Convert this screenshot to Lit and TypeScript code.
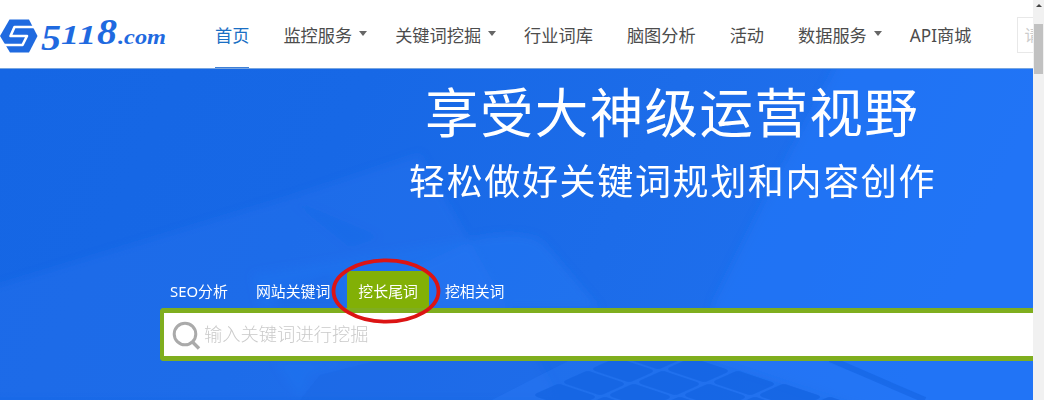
import { LitElement, html, css, svg } from 'lit';
import { customElement, state } from 'lit/decorators.js';

interface NavItem {
  label: string;
  menu?: boolean;
}

const NAV: NavItem[] = [
  { label: '首页' },
  { label: '监控服务', menu: true },
  { label: '关键词挖掘', menu: true },
  { label: '行业词库' },
  { label: '脑图分析' },
  { label: '活动' },
  { label: '数据服务', menu: true },
  { label: 'API商城' },
];

const TABS = ['SEO分析', '网站关键词', '挖长尾词', '挖相关词'];

@customElement('site-logo')
class SiteLogo extends LitElement {
  render() {
    return html`
      <svg width="168" height="48" viewBox="0 12 168 48">
        <path fill="#1f6ae0" d="M9.5 20.5H29L37.5 37L29 53.5H10L0 37Z" />
        <path fill="none" stroke="#fff" stroke-width="2.6" stroke-linejoin="round" d="M38 28H14.5L10.5 37H27L22.5 46H0" />
        <g class="word">
          <text x="41" y="51" font-size="36" textLength="20" lengthAdjust="spacingAndGlyphs">5</text>
          <text x="61" y="44.5" font-size="27" textLength="18" lengthAdjust="spacingAndGlyphs">1</text>
          <text x="78" y="44.5" font-size="27" textLength="18" lengthAdjust="spacingAndGlyphs">1</text>
          <text x="97" y="44.5" font-size="36" textLength="20" lengthAdjust="spacingAndGlyphs">8</text>
          <text x="118" y="44.5" font-size="22" textLength="48" lengthAdjust="spacingAndGlyphs">.com</text>
        </g>
      </svg>
    `;
  }

  static styles = css`
    :host {
      display: block;
      flex: none;
      width: 168px;
      height: 48px;
    }

    svg {
      display: block;
    }

    .word {
      fill: #1f6ae0;
      font-family: 'Liberation Serif', serif;
      font-style: italic;
      font-weight: bold;
    }
  `;
}

@customElement('site-header')
class SiteHeader extends LitElement {
  render() {
    return html`
      <header class="header">
        <site-logo></site-logo>
        <nav class="nav">
          ${NAV.map((item, i) => html`
            <a class=${i === 0 ? 'item active' : 'item'}>
              <span class="label">${item.label}</span>${item.menu ? html`<i class="caret"></i>` : ''}
            </a>
          `)}
        </nav>
        <div class="search">请</div>
      </header>
    `;
  }

  static styles = css`
    :host {
      display: block;
    }

    .header {
      display: flex;
      align-items: center;
      box-sizing: border-box;
      height: 69px;
      padding-top: 2px;
      background: #fff;
      border-bottom: 1px solid #77a5df;
      overflow: hidden;
    }

    .nav {
      display: flex;
      align-self: stretch;
      gap: 34px;
      margin-left: 47px;
      flex: none;
    }

    .item {
      display: flex;
      align-items: center;
      color: #4c4c4c;
      font-size: 17.2px;
      font-weight: 400;
      white-space: nowrap;
    }

    .label {
      padding-bottom: 1px;
    }

    .active {
      color: #1a6fc4;
      box-shadow: inset 0 -1px #3f7fd6;
    }

    .caret {
      margin: -3px -6px 0 7px;
      border: 4.5px solid transparent;
      border-top: 5px solid #666;
      border-bottom: 0;
    }

    .search {
      flex: none;
      width: 80px;
      height: 34px;
      margin-left: 46px;
      padding-left: 6px;
      border: 1px solid #e8e8e8;
      color: #ccc;
      font-size: 16px;
      line-height: 34px;
    }
  `;
}

@customElement('hero-backdrop')
class HeroBackdrop extends LitElement {
  // slanted key caps of the keyboard at the lower edge
  keys() {
    const keys = [];
    for (let row = 0; row < 4; row++) {
      for (let col = 0; col < 6; col++) {
        const x = 650 + col * 46 - row * 29;
        const y = 277 + col * 13 + row * 13;
        keys.push(svg`<path class="key" d="M${x} ${y}l30 10q4 2 0 4l-18 8q-4 2 -8 0l-30 -10q-4 -2 0 -4l18 -8q4 -2 8 0z" />`);
      }
    }
    return keys;
  }

  render() {
    return html`
      <svg width="1033" height="331" viewBox="0 0 1033 331">
        <defs>
          <linearGradient id="base" x1="0" y1="0" x2="1" y2="0.15">
            <stop offset="0" stop-color="#1566e4" />
            <stop offset="0.35" stop-color="#1768e6" />
            <stop offset="0.65" stop-color="#1c6ce9" />
            <stop offset="1" stop-color="#2071f0" />
          </linearGradient>
          <filter id="soft">
            <feGaussianBlur stdDeviation="4" />
          </filter>
        </defs>
        <rect width="1033" height="331" fill="url(#base)" />
        <g filter="url(#soft)">
          <path class="light" d="M-20 222L290 128L420 85L560 331H-20Z" />
          <path class="sheet" d="M845 -20H1053V351H900L700 285L715 230L760 140Z" />
          <path class="light" d="M252 205L480 168Q530 160 545 175L600 240H260Z" />
          <path class="light" d="M400 205L480 168Q530 160 545 175L600 240H400Z" />
          <path class="faint" d="M290 130L380 168L350 178Z" />
          <path class="dark" d="M275 225L330 206L345 240H275Z" />
          <path class="light" d="M275 292H360L310 305L300 331Z" />
        </g>
        <path class="faint" d="M300 331L320 306L380 291H570L492 331Z" />
        <path class="light" d="M492 331L570 291H820L930 331Z" />
        ${this.keys()}
        <path class="line" d="M830 290L925 331" />
      </svg>
    `;
  }

  static styles = css`
    svg {
      display: block;
    }

    .light {
      fill: #2f7bf5;
      opacity: 0.22;
    }

    .sheet {
      fill: #2277fb;
      opacity: 0.5;
    }

    .dark {
      fill: #0d5bd8;
      opacity: 0.25;
    }

    .faint {
      fill: #0d5bd8;
      opacity: 0.13;
    }

    .key {
      fill: #1464e2;
      opacity: 0.75;
    }

    .line {
      stroke: #1464e2;
      stroke-width: 6;
      opacity: 0.6;
    }
  `;
}

@customElement('search-panel')
class SearchPanel extends LitElement {
  @state() current = 2;

  render() {
    return html`
      <div class="tabs">
        ${TABS.map((tab, i) => html`
          <div class=${i === this.current ? 'tab current' : 'tab'} @click=${() => { this.current = i; }}>
            ${tab}
            ${i === 2 ? html`
              <svg class="ring" width="112" height="70" viewBox="0 0 112 70">
                <ellipse cx="56" cy="35" rx="52.5" ry="30.7" fill="none" stroke="#dc1414" stroke-width="3.8" />
              </svg>
            ` : ''}
          </div>
        `)}
      </div>
      <div class="box">
        <svg width="30" height="30" viewBox="0 0 30 30" fill="none" stroke="#aaa">
          <circle cx="13" cy="14" r="10.8" stroke-width="3" />
          <path d="M20.5 22L27 28.5" stroke-width="3.4" />
        </svg>
        <span class="placeholder">输入关键词进行挖掘</span>
      </div>
    `;
  }

  static styles = css`
    :host {
      display: block;
      padding-left: 160px;
    }

    .tabs {
      display: flex;
      height: 37px;
    }

    .tab {
      position: relative;
      padding: 0 11px;
      margin-right: 5px;
      border-radius: 4px 4px 0 0;
      color: #fff;
      font-size: 14.9px;
      line-height: 41px;
      white-space: nowrap;
    }

    .tab:first-child {
      padding-left: 10px;
      margin-right: 6px;
    }

    .tab:nth-child(2) {
      margin-right: 6px;
    }

    .current {
      background: #82b006;
    }

    .ring {
      position: absolute;
      left: -17px;
      top: -15px;
      z-index: 1;
    }

    .box {
      display: flex;
      align-items: center;
      height: 43px;
      padding-left: 8px;
      background: #fff;
      border: 5px solid #7fae1e;
      border-left-width: 4px;
      border-right: 0;
      border-radius: 4px 0 0 4px;
    }

    .placeholder {
      margin-left: 2px;
      padding-bottom: 2px;
      color: #cacaca;
      font-size: 18.3px;
      font-weight: 300;
      line-height: 24px;
    }
  `;
}

@customElement('app-root')
class AppRoot extends LitElement {
  render() {
    return html`
      <main class="page">
        <site-header></site-header>
        <section class="hero">
          <hero-backdrop class="backdrop"></hero-backdrop>
          <div class="content">
            <h1 class="title">享受大神级运营视野</h1>
            <h2 class="subtitle">轻松做好关键词规划和内容创作</h2>
            <search-panel></search-panel>
          </div>
        </section>
      </main>
      <div class="scrollbar">
        <i class="arrow"></i>
        <div class="thumb"></div>
      </div>
    `;
  }

  static styles = css`
    :host {
      display: flex;
      width: 1044px;
      height: 400px;
      overflow: hidden;
      font-family: 'Noto Sans', 'Noto Sans CJK SC', sans-serif;
    }

    .page {
      width: 1033px;
      height: 400px;
      overflow: hidden;
    }

    .hero {
      position: relative;
      height: 331px;
      overflow: hidden;
    }

    .backdrop {
      position: absolute;
      inset: 0;
    }

    .content {
      position: relative;
    }

    .title,
    .subtitle {
      margin: 0;
      color: #fff;
      font-weight: 400;
      white-space: nowrap;
    }

    .title {
      height: 88px;
      padding-left: 425px;
      font-size: 53.5px;
      letter-spacing: 1.4px;
      line-height: 87px;
    }

    .subtitle {
      height: 114px;
      padding-left: 409px;
      font-size: 36px;
      letter-spacing: 1.65px;
      line-height: 50px;
    }

    .scrollbar {
      display: flex;
      flex-direction: column;
      align-items: center;
      width: 11px;
      background: #f1f1f1;
    }

    .arrow {
      margin-top: 4px;
      border: 3px solid transparent;
      border-top: 0;
      border-bottom: 3px solid #444;
    }

    .thumb {
      width: 9px;
      height: 50px;
      margin-top: 17px;
      background: #c1c1c1;
    }
  `;
}
